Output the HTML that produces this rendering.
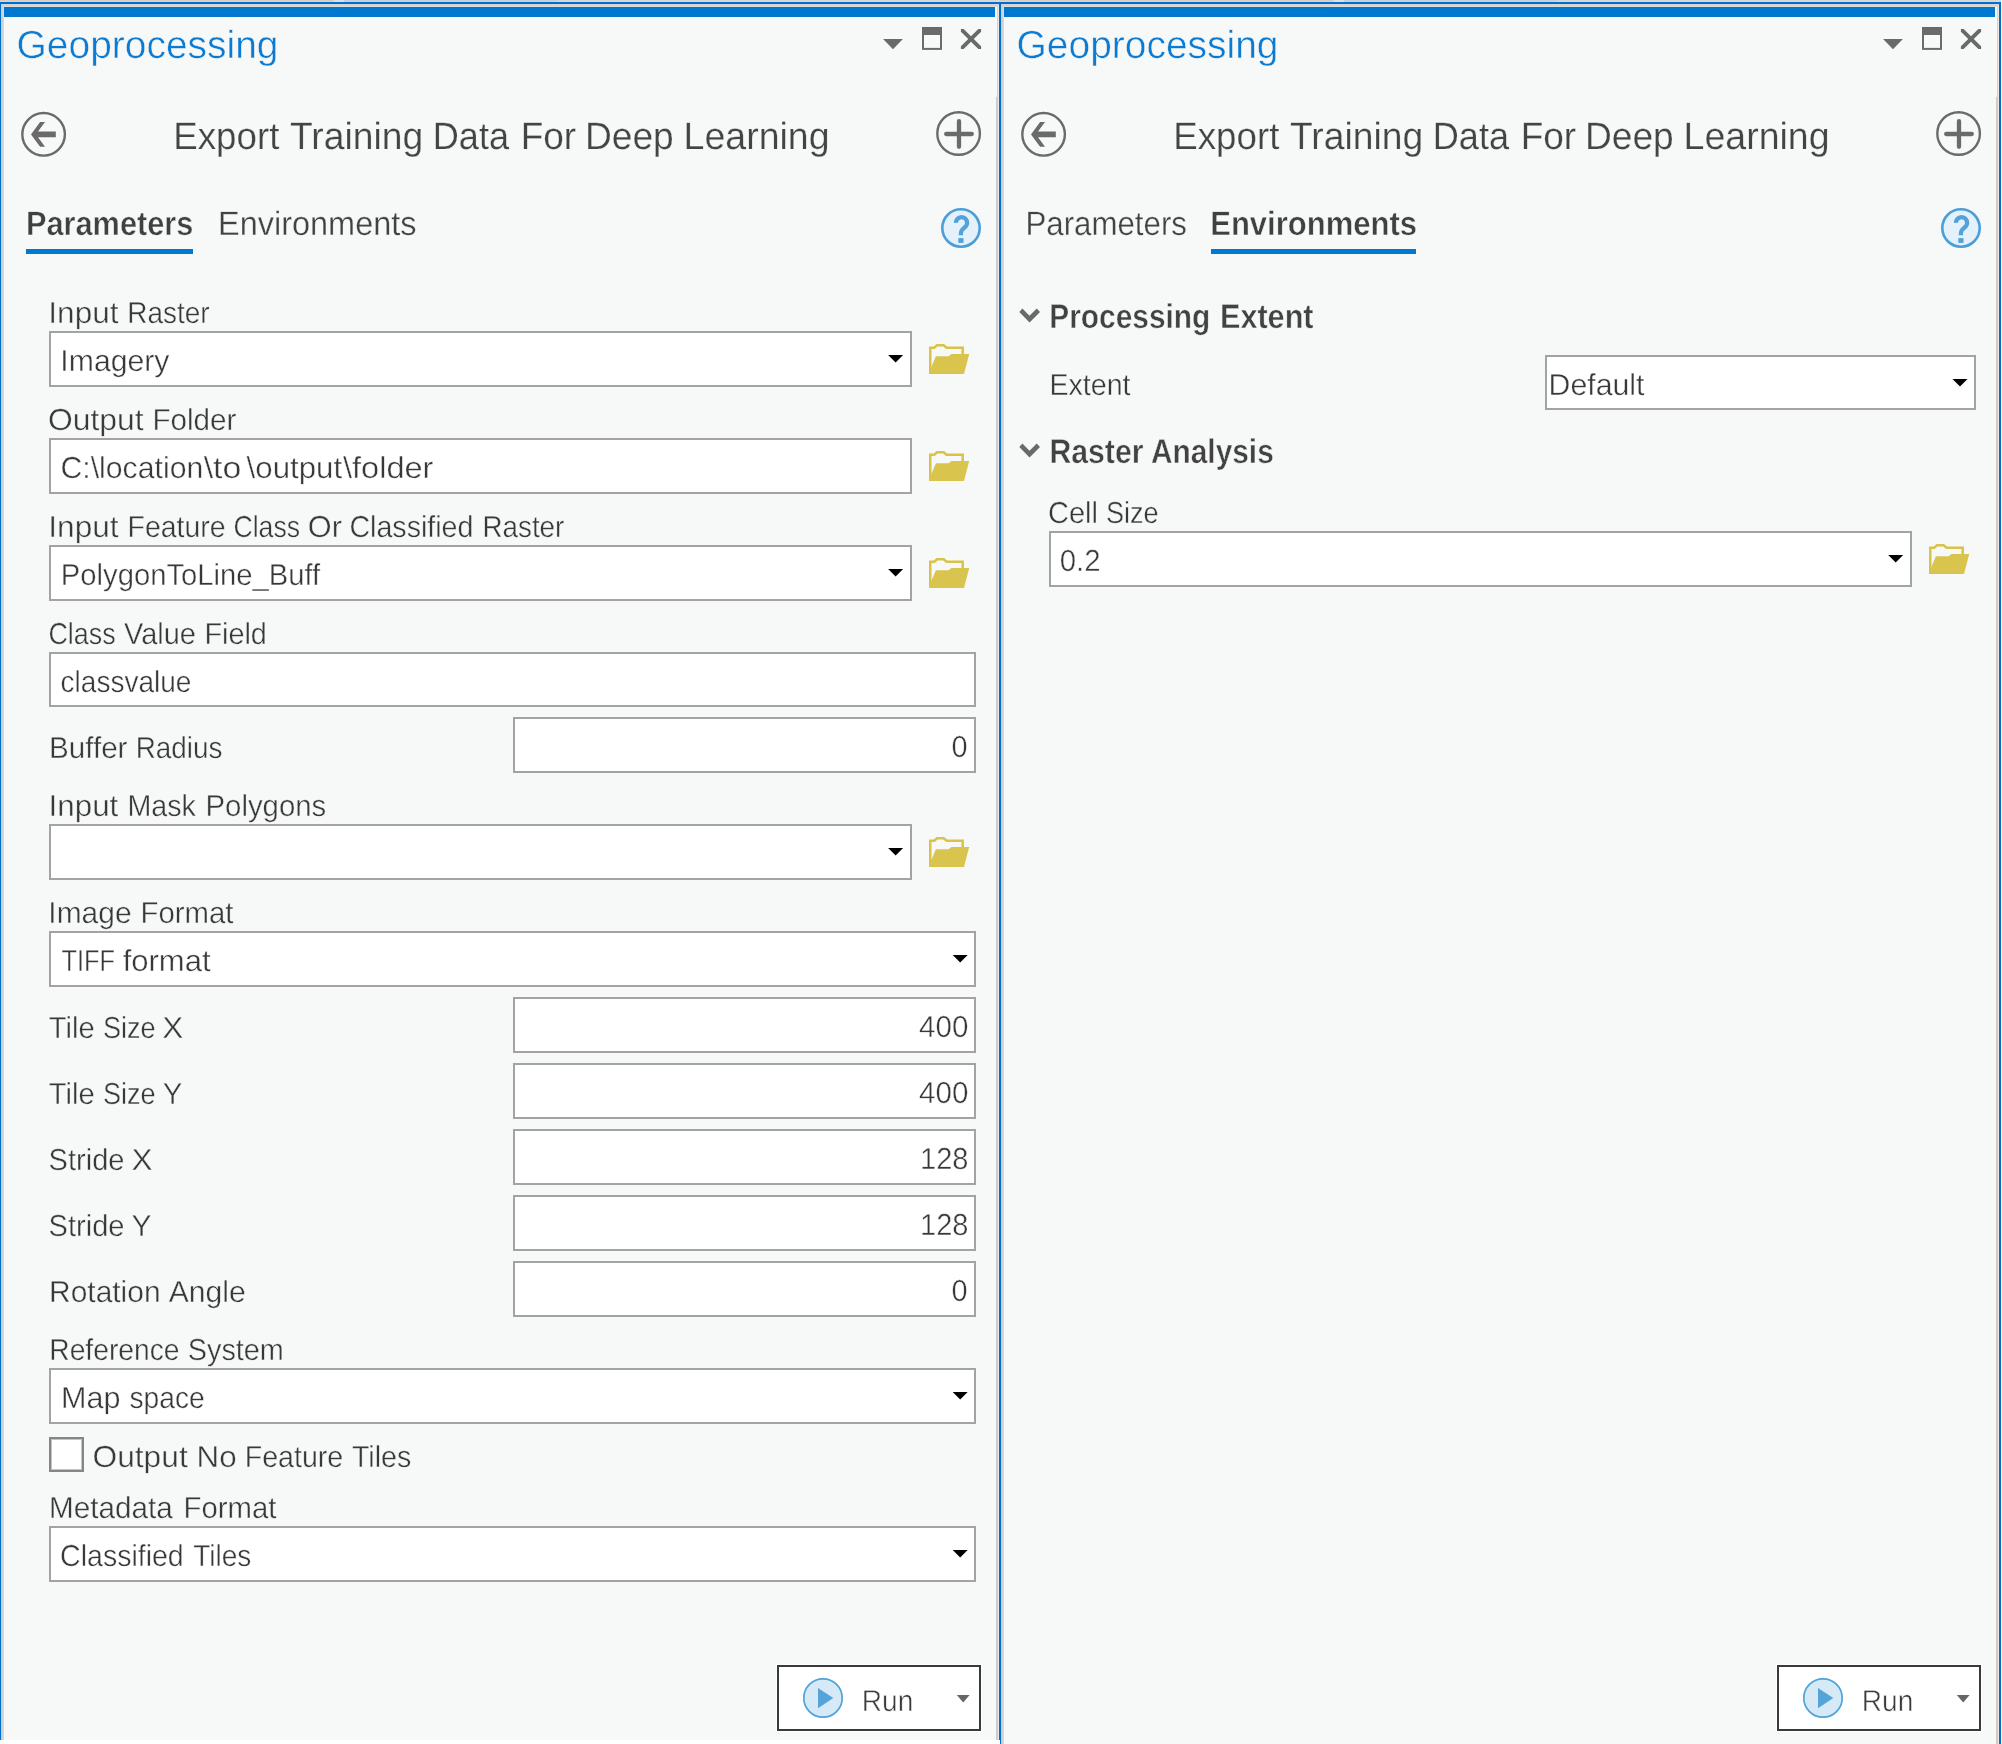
<!DOCTYPE html>
<html><head><meta charset="utf-8"><title>Geoprocessing</title>
<style>
html,body{margin:0;padding:0;}
body{width:2002px;height:1744px;position:relative;overflow:hidden;background:#fff;font-family:"Liberation Sans",sans-serif;}
.a{position:absolute;}
.t{position:absolute;white-space:pre;line-height:1;transform-origin:0 0;will-change:transform;}
.bx{position:absolute;box-sizing:border-box;border:2px solid #a3a3a3;background:#fff;}
svg{position:absolute;overflow:visible;}
</style></head><body>


<!-- top strips -->
<div class="a" style="left:0px;top:0;width:334px;height:2px;background:linear-gradient(#d4cbc3,#e2d3c7)"></div>
<div class="a" style="left:334px;top:0;width:10px;height:2px;background:linear-gradient(#dedede,#e4e2e0)"></div>
<div class="a" style="left:344px;top:0;width:213px;height:2px;background:linear-gradient(#c3cedb,#cdd5de)"></div>
<div class="a" style="left:557px;top:0;width:443px;height:2px;background:linear-gradient(#d4d4d4,#e0dad6)"></div>
<div class="a" style="left:1000px;top:0;width:334px;height:2px;background:linear-gradient(#d4cbc3,#e2d3c7)"></div>
<div class="a" style="left:1334px;top:0;width:10px;height:2px;background:linear-gradient(#dedede,#e4e2e0)"></div>
<div class="a" style="left:1344px;top:0;width:213px;height:2px;background:linear-gradient(#c3cedb,#cdd5de)"></div>
<div class="a" style="left:1557px;top:0;width:445px;height:2px;background:linear-gradient(#d4d4d4,#e0dad6)"></div>

<div class="a" style="left:0px;top:2px;width:1000px;height:1738px;background:#f7f8f8"></div>
<div class="a" style="left:0px;top:2px;width:1000px;height:2px;background:#006fcd"></div>
<div class="a" style="left:0px;top:4px;width:1000px;height:3px;background:linear-gradient(#ccd3da,#d6d6d6 50%,#e6dcd4)"></div>
<div class="a" style="left:1px;top:5px;width:3px;height:1735px;background:linear-gradient(90deg,#c3ccd4,#cfcfcf 40%,#e4dcd6)"></div>
<div class="a" style="left:0px;top:4px;width:1.4px;height:1736px;background:#0070cf"></div>
<div class="a" style="left:997px;top:5px;width:1px;height:92px;background:#d2d2d2"></div>
<div class="a" style="left:996px;top:97px;width:2px;height:1643px;background:#cdcdcd"></div>
<div class="a" style="left:998px;top:5px;width:1px;height:1735px;background:#efe7e1"></div>
<div class="a" style="left:999px;top:4px;width:1px;height:1736px;background:#0070cf"></div>
<div class="a" style="left:4px;top:7px;width:991px;height:10px;background:#0078d0"></div>
<div class="a" style="left:4px;top:17px;width:991px;height:1px;background:#fff"></div>
<div class="a" style="left:26px;top:249px;width:167px;height:5px;background:#0079d2"></div>

<div class="a" style="left:1000px;top:2px;width:1002px;height:1742px;background:#f7f8f8"></div>
<div class="a" style="left:1000px;top:2px;width:1001px;height:2px;background:#006fcd"></div>
<div class="a" style="left:1000px;top:4px;width:1002px;height:3px;background:linear-gradient(#ccd3da,#d6d6d6 50%,#e6dcd4)"></div>
<div class="a" style="left:1001px;top:5px;width:3px;height:1739px;background:linear-gradient(90deg,#c3ccd4,#cfcfcf 40%,#e4dcd6)"></div>
<div class="a" style="left:1000px;top:4px;width:1.4px;height:1740px;background:#0070cf"></div>
<div class="a" style="left:1997px;top:5px;width:1px;height:92px;background:#d2d2d2"></div>
<div class="a" style="left:1996px;top:97px;width:2px;height:1647px;background:#cdcdcd"></div>
<div class="a" style="left:1998px;top:5px;width:1px;height:1739px;background:#efe7e1"></div>
<div class="a" style="left:1999px;top:4px;width:2px;height:1740px;background:#0070cf"></div>
<div class="a" style="left:1004px;top:7px;width:991px;height:10px;background:#0078d0"></div>
<div class="a" style="left:1004px;top:17px;width:991px;height:1px;background:#fff"></div>
<div class="a" style="left:1211px;top:249px;width:205px;height:5px;background:#0079d2"></div>

<div class="bx" style="left:49px;top:331px;width:863px;height:56px"></div>
<div class="bx" style="left:49px;top:438px;width:863px;height:56px"></div>
<div class="bx" style="left:49px;top:545px;width:863px;height:56px"></div>
<div class="bx" style="left:49px;top:652px;width:927px;height:55px"></div>
<div class="bx" style="left:513px;top:717px;width:463px;height:56px"></div>
<div class="bx" style="left:49px;top:824px;width:863px;height:56px"></div>
<div class="bx" style="left:49px;top:931px;width:927px;height:56px"></div>
<div class="bx" style="left:513px;top:997px;width:463px;height:56px"></div>
<div class="bx" style="left:513px;top:1063px;width:463px;height:56px"></div>
<div class="bx" style="left:513px;top:1129px;width:463px;height:56px"></div>
<div class="bx" style="left:513px;top:1195px;width:463px;height:56px"></div>
<div class="bx" style="left:513px;top:1261px;width:463px;height:56px"></div>
<div class="bx" style="left:49px;top:1368px;width:927px;height:56px"></div>
<div class="bx" style="left:49px;top:1526px;width:927px;height:56px"></div>
<div class="bx" style="left:1545px;top:355px;width:431px;height:55px"></div>
<div class="bx" style="left:1049px;top:531px;width:863px;height:56px"></div>
<div class="bx" style="left:49px;top:1437px;width:35px;height:35px;border-color:#868686;box-shadow:inset 0 0 0 1px #c4c4c4"></div>
<svg style="left:0;top:0" width="1" height="1"><polygon points="888.15,355 903.15,355 895.65,362.6" fill="#000"/></svg>
<svg style="left:0;top:0" width="1" height="1"><polygon points="888.15,569 903.15,569 895.65,576.6" fill="#000"/></svg>
<svg style="left:0;top:0" width="1" height="1"><polygon points="888.15,848 903.15,848 895.65,855.6" fill="#000"/></svg>
<svg style="left:0;top:0" width="1" height="1"><polygon points="952.7,955 967.7,955 960.2,962.6" fill="#000"/></svg>
<svg style="left:0;top:0" width="1" height="1"><polygon points="952.7,1392 967.7,1392 960.2,1399.6" fill="#000"/></svg>
<svg style="left:0;top:0" width="1" height="1"><polygon points="952.7,1550 967.7,1550 960.2,1557.6" fill="#000"/></svg>
<svg style="left:0;top:0" width="1" height="1"><polygon points="1952.5,379 1967.5,379 1960,386.6" fill="#000"/></svg>
<svg style="left:0;top:0" width="1" height="1"><polygon points="1888.2,555 1903.2,555 1895.7,562.6" fill="#000"/></svg>
<svg style="left:920.0px;top:335.0px" width="52" height="42" viewBox="0 0 52 42"><path d="M10.25,38 L10.25,12.65 L14.3,12.65 L17,10.25 L23.6,10.25 L26.6,12.65 L42.7,12.65 L42.7,20" fill="none" stroke="#d8c348" stroke-width="2.5" stroke-linejoin="miter"/><polygon points="15.9,21.3 28.5,21.3 31.5,19 49.2,19 44,39 9,39 9,37.5" fill="#d9c54e"/></svg>
<svg style="left:920.0px;top:442.0px" width="52" height="42" viewBox="0 0 52 42"><path d="M10.25,38 L10.25,12.65 L14.3,12.65 L17,10.25 L23.6,10.25 L26.6,12.65 L42.7,12.65 L42.7,20" fill="none" stroke="#d8c348" stroke-width="2.5" stroke-linejoin="miter"/><polygon points="15.9,21.3 28.5,21.3 31.5,19 49.2,19 44,39 9,39 9,37.5" fill="#d9c54e"/></svg>
<svg style="left:920.0px;top:549.0px" width="52" height="42" viewBox="0 0 52 42"><path d="M10.25,38 L10.25,12.65 L14.3,12.65 L17,10.25 L23.6,10.25 L26.6,12.65 L42.7,12.65 L42.7,20" fill="none" stroke="#d8c348" stroke-width="2.5" stroke-linejoin="miter"/><polygon points="15.9,21.3 28.5,21.3 31.5,19 49.2,19 44,39 9,39 9,37.5" fill="#d9c54e"/></svg>
<svg style="left:920.0px;top:828.0px" width="52" height="42" viewBox="0 0 52 42"><path d="M10.25,38 L10.25,12.65 L14.3,12.65 L17,10.25 L23.6,10.25 L26.6,12.65 L42.7,12.65 L42.7,20" fill="none" stroke="#d8c348" stroke-width="2.5" stroke-linejoin="miter"/><polygon points="15.9,21.3 28.5,21.3 31.5,19 49.2,19 44,39 9,39 9,37.5" fill="#d9c54e"/></svg>
<svg style="left:1920.0px;top:535.0px" width="52" height="42" viewBox="0 0 52 42"><path d="M10.25,38 L10.25,12.65 L14.3,12.65 L17,10.25 L23.6,10.25 L26.6,12.65 L42.7,12.65 L42.7,20" fill="none" stroke="#d8c348" stroke-width="2.5" stroke-linejoin="miter"/><polygon points="15.9,21.3 28.5,21.3 31.5,19 49.2,19 44,39 9,39 9,37.5" fill="#d9c54e"/></svg>

<svg style="left:0;top:0" width="1" height="1">
<!-- window buttons -->
<polygon points="883.1,39.1 902.9,39.1 893,49.2" fill="#6a6a6a"/>
<rect x="922" y="27" width="20" height="7" fill="#6a6a6a"/>
<rect x="923" y="34" width="18" height="14.9" fill="none" stroke="#6a6a6a" stroke-width="2"/>
<polygon points="960.90,29.00 963.66,29.00 971.00,36.24 978.34,29.00 981.10,29.00 981.10,31.76 973.76,39.00 981.10,46.24 981.10,49.00 978.34,49.00 971.00,41.76 963.66,49.00 960.90,49.00 960.90,46.24 968.24,39.00 960.90,31.76" fill="#6a6a6a"/>
<!-- back -->
<circle cx="43.6" cy="134.35" r="21.3" fill="none" stroke="#6a6a6a" stroke-width="2.4"/>
<polygon points="31,134.4 40.1,122.1 45,122.1 38,131.5 55.8,131.5 55.8,137.2 38,137.2 45,146.8 40.1,146.8" fill="#6a6a6a"/>
<!-- plus -->
<circle cx="958.6" cy="133.5" r="21.3" fill="none" stroke="#6a6a6a" stroke-width="2.4"/>
<path d="M946.2,134 L971.8,134 M959,121.2 L959,146.8" stroke="#6a6a6a" stroke-width="4.3" stroke-linecap="round" fill="none"/>
<!-- help -->
<circle cx="961" cy="228" r="18.7" fill="#e4f1fb" stroke="#4b9ed8" stroke-width="2.6"/>
<!-- run button -->
<rect x="776" y="1664" width="206" height="68" fill="#fff"/>
<rect x="778" y="1666" width="202" height="64" fill="#fff" stroke="#3a3a3a" stroke-width="2"/>
<circle cx="823" cy="1698" r="19.2" fill="#d5e9f7" stroke="#4fa2da" stroke-width="1.7"/>
<polygon points="818,1688 833.3,1698.1 818,1708.3" fill="#55a4d9"/>
<polygon points="956.8,1695.1 969.6,1695.1 963.2,1702.6" fill="#666"/>
</svg>
<svg style="left:0;top:0" width="1" height="1">
<path d="M956,222.9 a5.55,5.55 0 1,1 9.9,3.3 l-2.9,2.7 q-2.1,1.9 -2.1,4.4 v2" fill="none" stroke="#52a2d9" stroke-width="4.2"/>
<rect x="958.3" y="238.1" width="5.2" height="4.8" fill="#52a2d9"/>
</svg>

<svg style="left:0;top:0" width="1" height="1">
<!-- window buttons -->
<polygon points="1883.1,39.1 1902.9,39.1 1893,49.2" fill="#6a6a6a"/>
<rect x="1922" y="27" width="20" height="7" fill="#6a6a6a"/>
<rect x="1923" y="34" width="18" height="14.9" fill="none" stroke="#6a6a6a" stroke-width="2"/>
<polygon points="1960.90,29.00 1963.66,29.00 1971.00,36.24 1978.34,29.00 1981.10,29.00 1981.10,31.76 1973.76,39.00 1981.10,46.24 1981.10,49.00 1978.34,49.00 1971.00,41.76 1963.66,49.00 1960.90,49.00 1960.90,46.24 1968.24,39.00 1960.90,31.76" fill="#6a6a6a"/>
<!-- back -->
<circle cx="1043.6" cy="134.35" r="21.3" fill="none" stroke="#6a6a6a" stroke-width="2.4"/>
<polygon points="1031,134.4 1040.1,122.1 1045,122.1 1038,131.5 1055.8,131.5 1055.8,137.2 1038,137.2 1045,146.8 1040.1,146.8" fill="#6a6a6a"/>
<!-- plus -->
<circle cx="1958.6" cy="133.5" r="21.3" fill="none" stroke="#6a6a6a" stroke-width="2.4"/>
<path d="M1946.2,134 L1971.8,134 M1959,121.2 L1959,146.8" stroke="#6a6a6a" stroke-width="4.3" stroke-linecap="round" fill="none"/>
<!-- help -->
<circle cx="1961" cy="228" r="18.7" fill="#e4f1fb" stroke="#4b9ed8" stroke-width="2.6"/>
<!-- run button -->
<rect x="1776" y="1664" width="206" height="68" fill="#fff"/>
<rect x="1778" y="1666" width="202" height="64" fill="#fff" stroke="#3a3a3a" stroke-width="2"/>
<circle cx="1823" cy="1698" r="19.2" fill="#d5e9f7" stroke="#4fa2da" stroke-width="1.7"/>
<polygon points="1818,1688 1833.3,1698.1 1818,1708.3" fill="#55a4d9"/>
<polygon points="1956.8,1695.1 1969.6,1695.1 1963.2,1702.6" fill="#666"/>
</svg>
<svg style="left:0;top:0" width="1" height="1">
<path d="M1956,222.9 a5.55,5.55 0 1,1 9.9,3.3 l-2.9,2.7 q-2.1,1.9 -2.1,4.4 v2" fill="none" stroke="#52a2d9" stroke-width="4.2"/>
<rect x="1958.3" y="238.1" width="5.2" height="4.8" fill="#52a2d9"/>
</svg>
<svg style="left:0;top:0" width="1" height="1"><polygon points="1019.3,312.1 1022.4,308.6 1029.5,315.7 1036.7,308.6 1040,312.1 1029.5,322.6" fill="#6a6a6a"/></svg>
<svg style="left:0;top:0" width="1" height="1"><polygon points="1019.3,447.1 1022.4,443.6 1029.5,450.7 1036.7,443.6 1040,447.1 1029.5,457.6" fill="#6a6a6a"/></svg>

<div class="a" style="left:2001px;top:0;width:1px;height:1744px;background:#fff"></div>
<svg style="left:0;top:0;will-change:transform" width="2002" height="1744" font-family="Liberation Sans, sans-serif" text-rendering="geometricPrecision">
<text transform="translate(16.57,58) scale(0.9983,1)" font-size="39" fill="#0a7ad2" stroke="#f7f8f8" stroke-width="0.5">Geoprocessing</text>
<text transform="translate(173.27,149) scale(0.9657,1)" font-size="38" fill="#444444" stroke="#f7f8f8" stroke-width="0.25">Export</text>
<text transform="translate(289.93,149) scale(0.9809,1)" font-size="38" fill="#444444" stroke="#f7f8f8" stroke-width="0.25">Training</text>
<text transform="translate(432.75,149) scale(0.9510,1)" font-size="38" fill="#444444" stroke="#f7f8f8" stroke-width="0.25">Data</text>
<text transform="translate(520.63,149) scale(0.9727,1)" font-size="38" fill="#444444" stroke="#f7f8f8" stroke-width="0.25">For</text>
<text transform="translate(584.98,149) scale(0.9772,1)" font-size="38" fill="#444444" stroke="#f7f8f8" stroke-width="0.25">Deep</text>
<text transform="translate(683.56,149) scale(0.9873,1)" font-size="38" fill="#444444" stroke="#f7f8f8" stroke-width="0.25">Learning</text>
<text transform="translate(25.95,235) scale(0.9093,1)" font-size="33.8" font-weight="700" fill="#404040" stroke="#f7f8f8" stroke-width="0.45">Parameters</text>
<text transform="translate(217.96,235) scale(0.9611,1)" font-size="33.8" fill="#424242" stroke="#f7f8f8" stroke-width="0.3">Environments</text>
<text transform="translate(861.76,1711) scale(0.9355,1)" font-size="30" fill="#3c3c3c" stroke="#fff" stroke-width="0.5">Run</text>
<text transform="translate(1016.57,58) scale(0.9983,1)" font-size="39" fill="#0a7ad2" stroke="#f7f8f8" stroke-width="0.5">Geoprocessing</text>
<text transform="translate(1173.27,149) scale(0.9657,1)" font-size="38" fill="#444444" stroke="#f7f8f8" stroke-width="0.25">Export</text>
<text transform="translate(1289.93,149) scale(0.9809,1)" font-size="38" fill="#444444" stroke="#f7f8f8" stroke-width="0.25">Training</text>
<text transform="translate(1432.75,149) scale(0.9510,1)" font-size="38" fill="#444444" stroke="#f7f8f8" stroke-width="0.25">Data</text>
<text transform="translate(1520.63,149) scale(0.9727,1)" font-size="38" fill="#444444" stroke="#f7f8f8" stroke-width="0.25">For</text>
<text transform="translate(1584.98,149) scale(0.9772,1)" font-size="38" fill="#444444" stroke="#f7f8f8" stroke-width="0.25">Deep</text>
<text transform="translate(1683.56,149) scale(0.9873,1)" font-size="38" fill="#444444" stroke="#f7f8f8" stroke-width="0.25">Learning</text>
<text transform="translate(1025.51,235) scale(0.9240,1)" font-size="33.8" fill="#424242" stroke="#f7f8f8" stroke-width="0.3">Parameters</text>
<text transform="translate(1210.21,235) scale(0.9178,1)" font-size="33.8" font-weight="700" fill="#404040" stroke="#f7f8f8" stroke-width="0.45">Environments</text>
<text transform="translate(1861.76,1711) scale(0.9355,1)" font-size="30" fill="#3c3c3c" stroke="#fff" stroke-width="0.5">Run</text>
<text transform="translate(48.33,323) scale(1.0415,1)" font-size="30.3" fill="#383838" stroke="#f7f8f8" stroke-width="0.4">Input</text>
<text transform="translate(127.29,323) scale(0.9214,1)" font-size="30.3" fill="#383838" stroke="#f7f8f8" stroke-width="0.4">Raster</text>
<text transform="translate(47.93,430) scale(1.0507,1)" font-size="30.3" fill="#383838" stroke="#f7f8f8" stroke-width="0.4">Output</text>
<text transform="translate(152.52,430) scale(0.9764,1)" font-size="30.3" fill="#383838" stroke="#f7f8f8" stroke-width="0.4">Folder</text>
<text transform="translate(48.32,537) scale(1.0419,1)" font-size="30.3" fill="#383838" stroke="#f7f8f8" stroke-width="0.4">Input</text>
<text transform="translate(127.56,537) scale(0.9375,1)" font-size="30.3" fill="#383838" stroke="#f7f8f8" stroke-width="0.4">Feature</text>
<text transform="translate(233.43,537) scale(0.8791,1)" font-size="30.3" fill="#383838" stroke="#f7f8f8" stroke-width="0.4">Class</text>
<text transform="translate(307.76,537) scale(1.0133,1)" font-size="30.3" fill="#383838" stroke="#f7f8f8" stroke-width="0.4">Or</text>
<text transform="translate(349.46,537) scale(0.9436,1)" font-size="30.3" fill="#383838" stroke="#f7f8f8" stroke-width="0.4">Classified</text>
<text transform="translate(482.49,537) scale(0.9167,1)" font-size="30.3" fill="#383838" stroke="#f7f8f8" stroke-width="0.4">Raster</text>
<text transform="translate(48.38,644) scale(0.8881,1)" font-size="30.3" fill="#383838" stroke="#f7f8f8" stroke-width="0.4">Class</text>
<text transform="translate(124.06,644) scale(0.9556,1)" font-size="30.3" fill="#383838" stroke="#f7f8f8" stroke-width="0.4">Value</text>
<text transform="translate(204.40,644) scale(0.9512,1)" font-size="30.3" fill="#383838" stroke="#f7f8f8" stroke-width="0.4">Field</text>
<text transform="translate(49.07,758) scale(0.9764,1)" font-size="30.3" fill="#383838" stroke="#f7f8f8" stroke-width="0.4">Buffer</text>
<text transform="translate(135.72,758) scale(0.9200,1)" font-size="30.3" fill="#383838" stroke="#f7f8f8" stroke-width="0.4">Radius</text>
<text transform="translate(48.60,816) scale(1.0337,1)" font-size="30.3" fill="#383838" stroke="#f7f8f8" stroke-width="0.4">Input</text>
<text transform="translate(127.46,816) scale(0.9449,1)" font-size="30.3" fill="#383838" stroke="#f7f8f8" stroke-width="0.4">Mask</text>
<text transform="translate(205.55,816) scale(0.9684,1)" font-size="30.3" fill="#383838" stroke="#f7f8f8" stroke-width="0.4">Polygons</text>
<text transform="translate(48.36,923) scale(0.9881,1)" font-size="30.3" fill="#383838" stroke="#f7f8f8" stroke-width="0.4">Image</text>
<text transform="translate(140.55,923) scale(0.9680,1)" font-size="30.3" fill="#383838" stroke="#f7f8f8" stroke-width="0.4">Format</text>
<text transform="translate(48.87,1038) scale(0.9604,1)" font-size="30.3" fill="#383838" stroke="#f7f8f8" stroke-width="0.4">Tile</text>
<text transform="translate(103.05,1038) scale(0.8923,1)" font-size="30.3" fill="#383838" stroke="#f7f8f8" stroke-width="0.4">Size</text>
<text transform="translate(162.37,1038) scale(1.0414,1)" font-size="30.3" fill="#383838" stroke="#f7f8f8" stroke-width="0.4">X</text>
<text transform="translate(48.87,1104) scale(0.9604,1)" font-size="30.3" fill="#383838" stroke="#f7f8f8" stroke-width="0.4">Tile</text>
<text transform="translate(103.05,1104) scale(0.8923,1)" font-size="30.3" fill="#383838" stroke="#f7f8f8" stroke-width="0.4">Size</text>
<text transform="translate(162.74,1104) scale(0.9716,1)" font-size="30.3" fill="#383838" stroke="#f7f8f8" stroke-width="0.4">Y</text>
<text transform="translate(48.62,1170) scale(0.9584,1)" font-size="30.3" fill="#383838" stroke="#f7f8f8" stroke-width="0.4">Stride</text>
<text transform="translate(131.58,1170) scale(1.0422,1)" font-size="30.3" fill="#383838" stroke="#f7f8f8" stroke-width="0.4">X</text>
<text transform="translate(48.62,1236) scale(0.9584,1)" font-size="30.3" fill="#383838" stroke="#f7f8f8" stroke-width="0.4">Stride</text>
<text transform="translate(131.46,1236) scale(0.9934,1)" font-size="30.3" fill="#383838" stroke="#f7f8f8" stroke-width="0.4">Y</text>
<text transform="translate(49.06,1302) scale(0.9882,1)" font-size="30.3" fill="#383838" stroke="#f7f8f8" stroke-width="0.4">Rotation</text>
<text transform="translate(168.75,1302) scale(0.9927,1)" font-size="30.3" fill="#383838" stroke="#f7f8f8" stroke-width="0.4">Angle</text>
<text transform="translate(49.29,1360) scale(0.9312,1)" font-size="30.3" fill="#383838" stroke="#f7f8f8" stroke-width="0.4">Reference</text>
<text transform="translate(187.76,1360) scale(0.9513,1)" font-size="30.3" fill="#383838" stroke="#f7f8f8" stroke-width="0.4">System</text>
<text transform="translate(92.53,1467) scale(1.0462,1)" font-size="30.3" fill="#383838" stroke="#f7f8f8" stroke-width="0.4">Output</text>
<text transform="translate(196.50,1467) scale(1.0344,1)" font-size="30.3" fill="#383838" stroke="#f7f8f8" stroke-width="0.4">No</text>
<text transform="translate(244.70,1467) scale(0.9437,1)" font-size="30.3" fill="#383838" stroke="#f7f8f8" stroke-width="0.4">Feature</text>
<text transform="translate(351.90,1467) scale(0.9439,1)" font-size="30.3" fill="#383838" stroke="#f7f8f8" stroke-width="0.4">Tiles</text>
<text transform="translate(49.12,1518) scale(0.9791,1)" font-size="30.3" fill="#383838" stroke="#f7f8f8" stroke-width="0.4">Metadata</text>
<text transform="translate(183.55,1518) scale(0.9680,1)" font-size="30.3" fill="#383838" stroke="#f7f8f8" stroke-width="0.4">Format</text>
<text transform="translate(60.37,371) scale(0.9962,1)" font-size="30.3" fill="#383838" stroke="#fff" stroke-width="0.4">Imagery</text>
<text transform="translate(60.50,478) scale(0.9972,1)" font-size="30.3" fill="#383838" stroke="#fff" stroke-width="0.4">C:\location</text>
<text transform="translate(203.70,478) scale(1.1177,1)" font-size="30.3" fill="#383838" stroke="#fff" stroke-width="0.4">\to</text>
<text transform="translate(246.60,478) scale(1.0307,1)" font-size="30.3" fill="#383838" stroke="#fff" stroke-width="0.4">\output</text>
<text transform="translate(343.00,478) scale(1.0735,1)" font-size="30.3" fill="#383838" stroke="#fff" stroke-width="0.4">\folder</text>
<text transform="translate(60.85,585) scale(0.9641,1)" font-size="30.3" fill="#383838" stroke="#fff" stroke-width="0.4">PolygonToLine_Buff</text>
<text transform="translate(60.56,692) scale(0.9248,1)" font-size="30.3" fill="#383838" stroke="#fff" stroke-width="0.4">classvalue</text>
<text transform="translate(951.58,757) scale(0.9542,1)" font-size="30.3" fill="#383838" stroke="#fff" stroke-width="0.4">0</text>
<text transform="translate(61.51,971) scale(0.8347,1)" font-size="30.3" fill="#383838" stroke="#fff" stroke-width="0.4">TIFF</text>
<text transform="translate(122.63,971) scale(1.0245,1)" font-size="30.3" fill="#383838" stroke="#fff" stroke-width="0.4">format</text>
<text transform="translate(919.11,1037) scale(0.9754,1)" font-size="30.3" fill="#383838" stroke="#fff" stroke-width="0.4">400</text>
<text transform="translate(919.11,1103) scale(0.9754,1)" font-size="30.3" fill="#383838" stroke="#fff" stroke-width="0.4">400</text>
<text transform="translate(919.99,1169) scale(0.9579,1)" font-size="30.3" fill="#383838" stroke="#fff" stroke-width="0.4">128</text>
<text transform="translate(919.99,1235) scale(0.9579,1)" font-size="30.3" fill="#383838" stroke="#fff" stroke-width="0.4">128</text>
<text transform="translate(951.58,1301) scale(0.9542,1)" font-size="30.3" fill="#383838" stroke="#fff" stroke-width="0.4">0</text>
<text transform="translate(60.98,1408) scale(1.0080,1)" font-size="30.3" fill="#383838" stroke="#fff" stroke-width="0.4">Map</text>
<text transform="translate(129.53,1408) scale(0.9303,1)" font-size="30.3" fill="#383838" stroke="#fff" stroke-width="0.4">space</text>
<text transform="translate(60.07,1566) scale(0.9416,1)" font-size="30.3" fill="#383838" stroke="#fff" stroke-width="0.4">Classified</text>
<text transform="translate(193.28,1566) scale(0.9245,1)" font-size="30.3" fill="#383838" stroke="#fff" stroke-width="0.4">Tiles</text>
<text transform="translate(1049.43,395) scale(0.9445,1)" font-size="30.3" fill="#383838" stroke="#f7f8f8" stroke-width="0.4">Extent</text>
<text transform="translate(1548.51,395) scale(0.9995,1)" font-size="30.3" fill="#383838" stroke="#fff" stroke-width="0.4">Default</text>
<text transform="translate(1048.03,523) scale(0.9565,1)" font-size="30.3" fill="#383838" stroke="#f7f8f8" stroke-width="0.4">Cell</text>
<text transform="translate(1106.05,523) scale(0.8923,1)" font-size="30.3" fill="#383838" stroke="#f7f8f8" stroke-width="0.4">Size</text>
<text transform="translate(1059.71,571) scale(0.9696,1)" font-size="30.3" fill="#383838" stroke="#fff" stroke-width="0.4">0.2</text>
<text transform="translate(1049.34,328) scale(0.8777,1)" font-size="34" font-weight="700" fill="#424242" stroke="#f7f8f8" stroke-width="0.45">Processing</text>
<text transform="translate(1220.01,328) scale(0.8998,1)" font-size="34" font-weight="700" fill="#424242" stroke="#f7f8f8" stroke-width="0.45">Extent</text>
<text transform="translate(1049.42,463) scale(0.8882,1)" font-size="34" font-weight="700" fill="#424242" stroke="#f7f8f8" stroke-width="0.45">Raster</text>
<text transform="translate(1150.98,463) scale(0.8779,1)" font-size="34" font-weight="700" fill="#424242" stroke="#f7f8f8" stroke-width="0.45">Analysis</text>
</svg>
</body></html>
